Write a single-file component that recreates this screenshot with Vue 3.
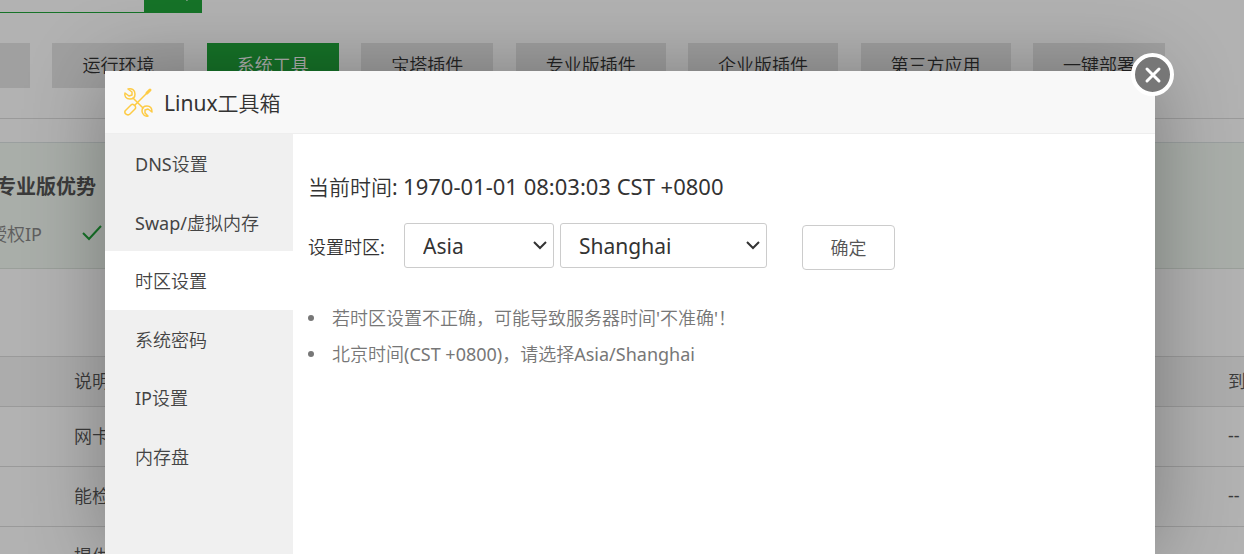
<script setup>
import { ref } from 'vue'

const tabs = ['运行环境', '系统工具', '宝塔插件', '专业版插件', '企业版插件', '第三方应用', '一键部署']
const rows = ['网卡流量', '能检测', '提供服务']
const menu = ['DNS设置', 'Swap/虚拟内存', '时区设置', '系统密码', 'IP设置', '内存盘']
const current = ref('时区设置')
const region = ref('Asia')
const city = ref('Shanghai')
</script>

<template>
  <div class="screen">
    <main class="page">
      <form class="search" @submit.prevent>
        <input type="text" aria-label="搜索">
        <button type="submit" aria-label="搜索">
          <svg width="20" height="20" viewBox="0 0 20 20"><circle cx="8" cy="8" r="6" /><path d="M12 12l6 6" /></svg>
        </button>
      </form>
      <nav class="tabs">
        <button class="tab first" type="button" aria-label="全部"></button>
        <button v-for="t in tabs" :key="t" class="tab" :class="{ on: t === '系统工具' }" type="button">{{ t }}</button>
      </nav>
      <section class="promo">
        <h2>专业版优势</h2>
        <p>
          <span>授权IP</span>
          <svg width="20" height="16" viewBox="0 0 20 16"><path d="M1 8l6 6L19 1" /></svg>
        </p>
      </section>
      <table class="list">
        <thead>
          <tr><th>说明</th><th class="end">到期</th></tr>
        </thead>
        <tbody>
          <tr v-for="r in rows" :key="r"><td>{{ r }}</td><td class="end">--</td></tr>
        </tbody>
      </table>
    </main>

    <div class="mask">
      <div class="dialog" role="dialog" aria-labelledby="dialog-title">
        <button class="close" type="button" aria-label="关闭">
          <svg width="18" height="18" viewBox="0 0 18 18"><path d="M3 3l12 12M15 3L3 15" /></svg>
        </button>
        <header class="head">
          <svg class="tools" width="30" height="30" viewBox="0 0 30 30">
            <path d="M10 11l10 10M12 18L25 5" />
            <path class="tip" d="M24 6l3-3" />
            <path d="M5 2l4 3v3l-3 1-4-3c-1 3 1 6 5 6 3 0 5-2 5-5 0-4-3-6-7-5z" />
            <path d="M25 29l-3-3v-3l3-1 4 3c0-4-2-6-5-6s-5 2-5 5 3 6 6 5z" />
            <path d="M11 18c2 1 2 3 1 4l-5 5c-2 2-6 0-5-3l6-6c1-1 2-1 3 0z" />
          </svg>
          <h1 id="dialog-title">Linux工具箱</h1>
        </header>
        <div class="body">
          <nav class="side">
            <button v-for="m in menu" :key="m" type="button" :class="{ on: m === current }" @click="current = m">{{ m }}</button>
          </nav>
          <section class="content">
            <p class="now">当前时间: <span>1970-01-01 08:03:03 CST +0800</span></p>
            <form class="zone" @submit.prevent>
              <label for="region">设置时区:</label>
              <span class="pick region">
                <select id="region" v-model="region"><option>Asia</option></select>
                <svg width="14" height="10" viewBox="0 0 14 10"><path d="M1 1l6 6 6-6" /></svg>
              </span>
              <span class="pick city">
                <select v-model="city" aria-label="城市"><option>Shanghai</option></select>
                <svg width="14" height="10" viewBox="0 0 14 10"><path d="M1 1l6 6 6-6" /></svg>
              </span>
              <button class="ok" type="submit">确定</button>
            </form>
            <ul class="tips">
              <li>若时区设置不正确，可能导致服务器时间'不准确'！</li>
              <li>北京时间(CST +0800)，请选择Asia/Shanghai</li>
            </ul>
          </section>
        </div>
      </div>
    </div>
  </div>
</template>

<style>
body { margin: 0; }
</style>

<style scoped>
* { box-sizing: border-box; }
h1, h2, p, ul { margin: 0; padding: 0; font-weight: 400; }
svg { fill: none; stroke: currentColor; flex: none; }
button, select, input { font: inherit; color: inherit; margin: 0; border: 0; border-radius: 0; padding: 0; background: none; }
.screen {
  position: relative;
  height: 100vh;
  overflow: hidden;
  background: #fff;
  color: #555;
  font-family: "Noto Sans", "Noto Sans CJK SC DemiLight", "Noto Sans CJK SC", sans-serif;
  font-size: 18px;
  font-weight: 400;
  white-space: nowrap;
}
.search { display: flex; height: 13px; }
.search input { width: 144px; border-bottom: 1px solid #20a53a; }
.search button { width: 58px; padding-left: 14px; background: #20a53a; color: #fff; display: flex; justify-content: center; align-items: flex-end; overflow: hidden; }
.search svg { stroke-width: 3; margin-bottom: 11px; }
.tabs { display: flex; justify-content: space-between; margin: 30px 79px 0 0; }
.tab { height: 45px; padding: 0 30px 3px; background: #e6e6e6; color: #333; }
.tab.first { width: 30px; padding: 0; }
.tab.on { background: #20a53a; color: #fff; }
.promo { margin-top: 30px; border-top: 1px solid #ddd; padding-top: 23px; }
.promo h2 { padding-top: 28px; height: 74px; background: #f2f9f2; border-top: 1px solid #dde4e4; font-family: "Noto Sans CJK SC", sans-serif; font-size: 20px; line-height: 30px; font-weight: 700; text-indent: -4px; }
.promo p { display: flex; align-items: center; gap: 40px; height: 53px; padding-bottom: 19px; background: #f2f9f2; border-bottom: 1px solid #dde4dd; color: #888; }
.promo span { margin-left: -11px; }
.promo svg { color: #20a53a; stroke-width: 2; }
.list { width: 100%; margin-top: 87px; border-collapse: collapse; color: #555; }
.list th, .list td { padding: 0 0 3px 74px; text-align: left; font-weight: 400; border-top: 1px solid #ddd; height: 60px; }
.list th { height: 50px; background: #f6f6f6; }
.list .end { width: 16px; padding-left: 0; max-width: 16px; overflow: hidden; }
.mask { position: absolute; inset: 0; display: flex; padding: 71px 89px 0 105px; background: rgba(0, 0, 0, .3); }
.dialog { position: relative; flex: 1; display: flex; flex-direction: column; background: #fff; color: #333; box-shadow: 1px 1px 75px rgba(0, 0, 0, .3); }
.close { position: absolute; top: -18px; right: -19px; width: 43px; height: 43px; display: grid; place-items: center; border: 4px solid #fff; border-radius: 50%; background: #777; color: #fff; }
.close svg { stroke-width: 3; stroke-linecap: round; }
.head { display: flex; align-items: center; gap: 11px; height: 63px; padding-left: 18px; background: #f8f8f8; border-bottom: 1px solid #eee; }
.head h1 { padding-top: 2px; font-size: 21px; line-height: 30px; }
.tools { color: #fdcb45; stroke-width: 1.5; stroke-linejoin: round; stroke-linecap: round; }
.tools .tip { stroke-width: 3; }
.body { flex: 1; display: flex; background: linear-gradient(to right, #f0f0f0 188px, #fff 188px); }
.side { width: 188px; display: grid; grid-template-rows: repeat(6, 1fr); height: 351px; }
.side button { padding-left: 30px; text-align: left; color: #444; }
.side .on { background: #fff; }
.content { flex: 1; padding: 37px 15px; }
.now { font-size: 21px; line-height: 30px; }
.now span { font-size: 22px; }
.zone { display: flex; align-items: center; margin-top: 19px; }
.zone label { width: 96px; }
.pick { position: relative; height: 45px; margin-right: 6px; }
.pick select { width: 100%; height: 45px; padding: 0 18px; appearance: none; border: 1px solid #ccc; border-radius: 3px; font-size: 21px; background: #fff; }
.pick svg { position: absolute; right: 7px; top: 18px; stroke-width: 2; pointer-events: none; }
.region { width: 150px; }
.city { width: 207px; }
.ok { width: 93px; height: 45px; margin: 4px 0 0 29px; padding-bottom: 2px; border: 1px solid #ccc; border-radius: 4px; color: #555; }
.tips { margin-top: 30px; color: #777; line-height: 36px; list-style: none; }
.tips li { display: flex; align-items: center; gap: 18px; }
.tips li::before { content: ""; width: 6px; height: 6px; border-radius: 50%; background: #777; }
</style>
